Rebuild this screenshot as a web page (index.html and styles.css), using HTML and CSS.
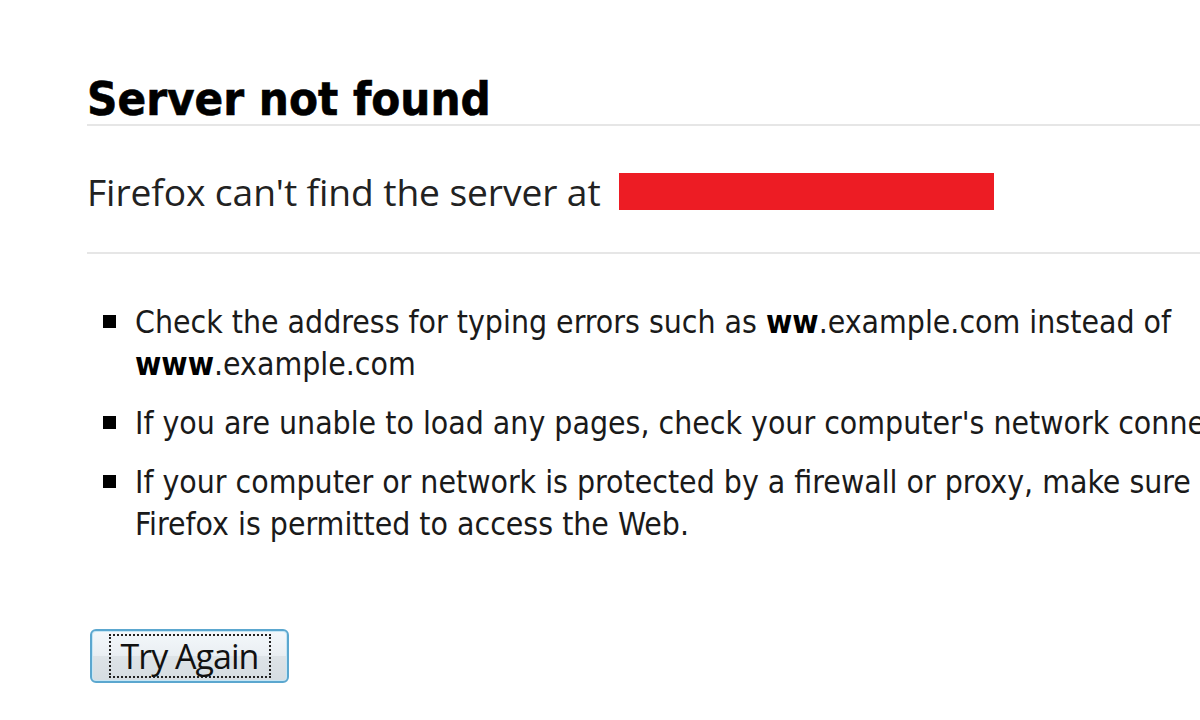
FILE: index.html
```html
<!DOCTYPE html>
<html>
<head>
<meta charset="utf-8">
<link rel="stylesheet" href="styles.css">
</head>
<body>
<div class="page">
  <h1 class="title">Server not found</h1>
  <div class="short">
    <span>Firefox can't find the server at</span>
    <span class="redact"></span>
  </div>
  <ul class="tips">
    <li>Check the address for typing errors such as <b>ww</b>.example.com instead of <b>www</b>.example.com</li>
    <li>If you are unable to load any pages, check your computer's network connection.</li>
    <li>If your computer or network is protected by a firewall or proxy, make sure that Firefox is permitted to access the Web.</li>
  </ul>
  <div class="actions">
    <button class="btn"><span class="focus">Try Again</span></button>
  </div>
</div>
</body>
</html>
```

FILE: styles.css
```css
html, body {
  margin: 0;
  background: #ffffff;
  overflow: hidden;
  width: 1200px;
  height: 720px;
}
.page {
  padding: 74px 0 0 87px;
  width: 1113px;
  font-family: "DejaVu Sans Condensed", "DejaVu Sans", sans-serif;
  color: #1a1a1a;
}
.title {
  margin: 0;
  font-size: 47px;
  line-height: 50px;
  font-weight: bold;
  color: #000;
  border-bottom: 2px solid #e6e6e6;
  padding-bottom: 0;
  -webkit-text-stroke: 0.6px #000;
}
.short {
  display: flex;
  align-items: center;
  height: 128px;
  border-bottom: 2px solid #e6e6e6;
  font-family: "Open Sans", sans-serif;
  font-size: 37.2px;
  color: #222;
  gap: 18px;
  padding-top: 4px;
  box-sizing: border-box;
  letter-spacing: -0.1px;
}
.redact {
  display: inline-block;
  width: 375px;
  height: 37px;
  background: #ed1c24;
}
.tips {
  margin: 0;
  padding: 47px 0 0 48px;
  list-style: none;
  font-size: 31.7px;
  line-height: 42px;
  width: 1220px;
}
.tips li {
  position: relative;
  margin-bottom: 17px;
}
.tips li::before {
  content: "";
  position: absolute;
  left: -32px;
  top: 14px;
  width: 13px;
  height: 13px;
  background: #000;
}
.tips b {
  color: #000;
}
.actions {
  padding-top: 67px;
}
.btn {
  width: 199px;
  height: 54px;
  margin-left: 3px;
  border: 2px solid #5ba7cf;
  border-radius: 6px;
  background: linear-gradient(#f4f8fb 0%, #e9eef2 50%, #dde3e7 51%, #d6dde2 100%);
  box-shadow: inset 0 0 0 1px #c6e6f5;
  padding: 0;
  display: flex;
  align-items: center;
  justify-content: center;
}
.focus {
  font-family: "Open Sans", sans-serif;
  font-size: 34px;
  line-height: 40px;
  color: #111;
  border: 2px dotted #222;
  padding: 0 6px;
  width: 146px;
  text-align: center;
  letter-spacing: -1px;
}
```
